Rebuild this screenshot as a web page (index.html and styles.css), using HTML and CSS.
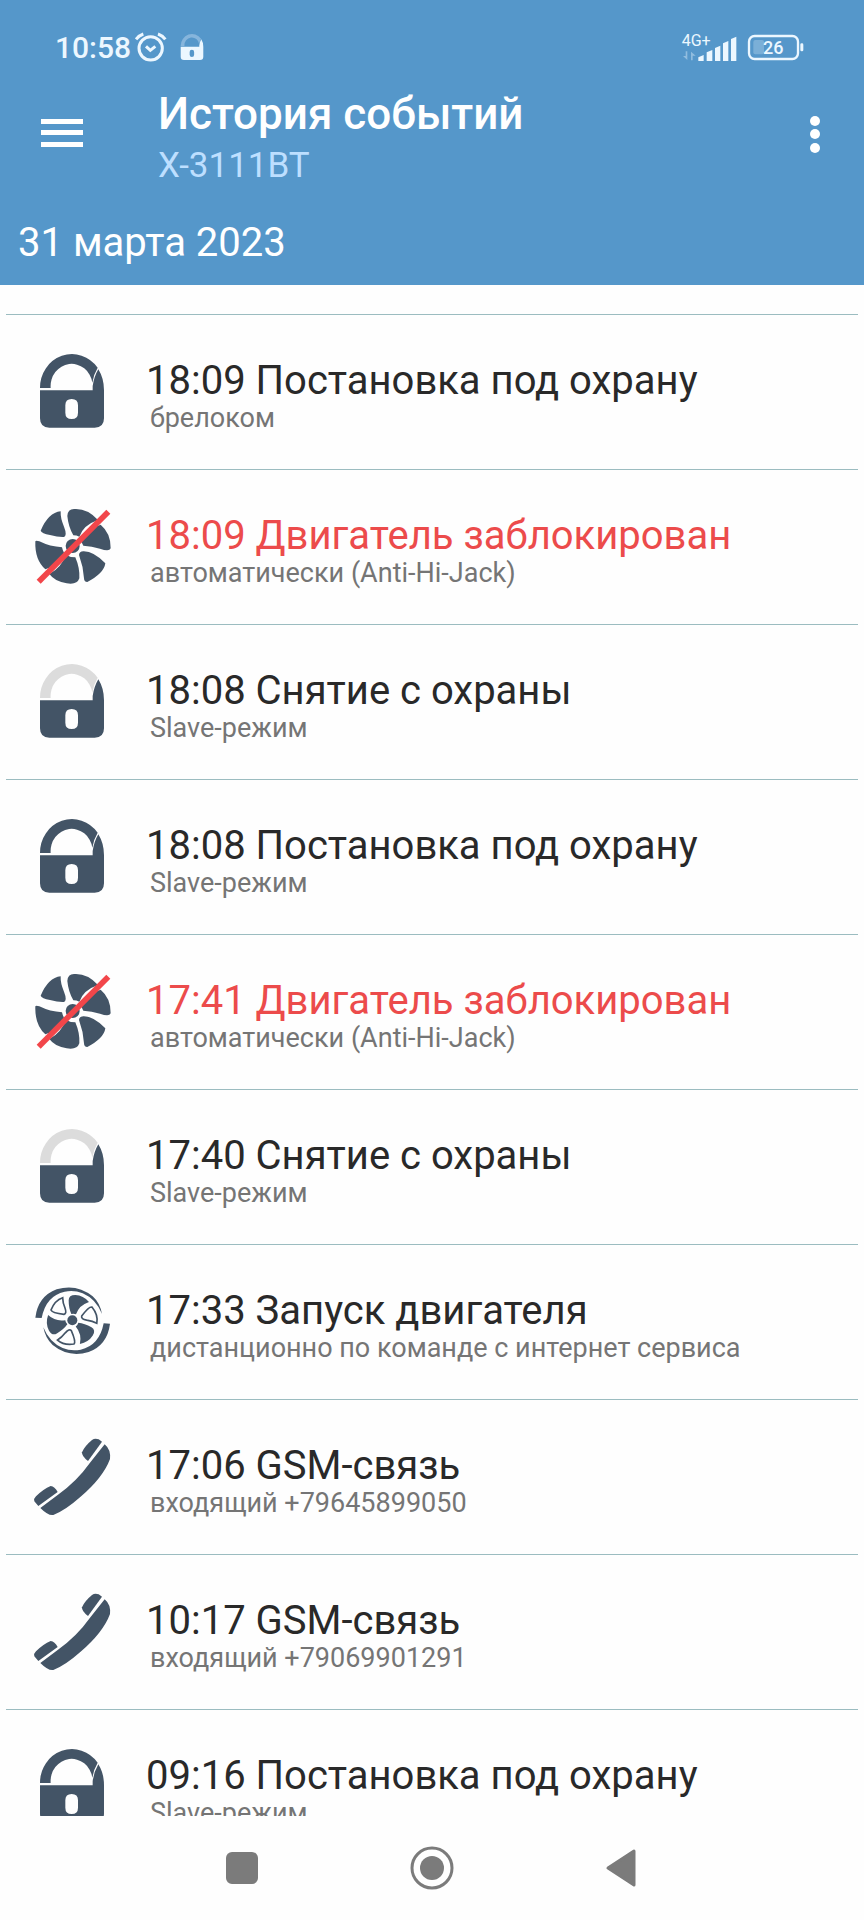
FILE: index.html
```html
<!DOCTYPE html>
<html lang="ru">

<head>
  <meta charset="utf-8">
  <meta name="viewport" content="width=device-width, initial-scale=1">
  <title>История событий</title>
  <link rel="stylesheet" href="styles.css">
</head>

<body>

  <!-- Иконки -->
  <svg class="sprite" aria-hidden="true">
    <symbol id="lock" viewBox="96 66 240 240">
      <path class="shackle" d="M120 174A96 101 0 0 1 293 113Q281 133 277 158A63 67 0 0 0 152 174Z" />
      <path fill-rule="evenodd" d="M120 181H278V168Q282 140 295 118Q312 145 312 181V265Q312 293 284 293H148Q120 293 120 265ZM215 207Q196 207 196 226V248Q196 267 215 267Q234 267 234 248V226Q234 207 215 207Z" />
    </symbol>
    <symbol id="blocked" viewBox="96 81 240 240">
      <path d="M182 94Q145 98 122 152Q125 160 150 165Q175 172 192 171Q202 165 192 140Q181 115 182 94Z" />
      <path d="M202 108Q203 87 222 87Q262 84 294 120Q250 135 238 170Q230 166 220 166Q205 140 202 108Z" />
      <path d="M302 134Q333 160 332 205Q328 216 300 206Q275 198 250 197Q246 188 242 182Q255 148 302 134Z" />
      <path d="M250 214Q280 213 316 250Q312 280 262 306Q252 306 252 295Q250 260 237 225Q238 214 250 214Z" />
      <path d="M226 232Q240 265 238 295Q232 315 200 310Q165 305 148 282Q185 262 197 224Q210 232 226 232Z" />
      <path d="M106 184Q108 180 118 184Q150 200 186 202Q188 212 192 218Q180 255 136 268Q104 240 106 184Z" />
      <circle cx="218" cy="198" r="21" />
      <path class="strike" d="M116 305L325 95" />
    </symbol>
    <symbol id="engine" viewBox="96 69 240 240">
      <path id="arc" d="M106 176Q114 112 170 91Q230 73 278 112Q300 132 306 165Q288 120 248 103Q222 92 194 98Q138 110 125 177Z" />
      <use href="#arc" transform="rotate(180 218 185)" />
      <g id="blades">
        <path d="M206 124Q206 108 226 108Q250 109 267 129Q238 138 228 166Q222 163 214 165Q206 148 206 124Z" />
        <path class="line" d="M188 116Q164 124 153 153Q156 162 192 166Q201 164 195 147Q188 130 188 116Z" />
      </g>
      <use href="#blades" transform="rotate(120 217 184)" />
      <use href="#blades" transform="rotate(240 217 184)" />
      <circle cx="217" cy="184" r="15" />
    </symbol>
    <symbol id="phone" viewBox="96 84 240 240">
      <path d="M314 106Q333 122 330 150Q310 205 240 265Q195 305 160 318Q145 321 121 297L174 257Q232 215 270 161Z" />
      <path d="M306 98L296 91Q284 87 276 93Q254 111 246 130Q245 142 264 156Z" />
      <path d="M115 291L103 277Q101 268 108 262Q130 240 152 231Q164 233 173 249Z" />
    </symbol>
  </svg>

  <header class="header">
    <div class="status">
      <span class="clock">10:58</span>
      <svg class="alarm" viewBox="408 95 96 90">
        <circle cx="455" cy="144" r="35" />
        <path d="M441 138L454 150L469 138M411 117Q419 106 433 101M477 101Q491 106 499 117" />
      </svg>
      <svg class="guard" viewBox="114 70 204 226"><use href="#lock" x="96" y="66" width="240" height="240" /></svg>
      <svg class="signal" viewBox="748 93 171 90">
        <text x="750" y="134">4G+</text>
        <path class="dim" d="M767 151V177L754 165H762V151ZM778 178V152L792 164H783V178Z" />
        <path d="M800 180V169L816 162V180ZM825 180V154L842 147V180ZM850 180V141L866 134V180ZM874 180V127L890 120V180ZM898 180V114L914 107V180Z" />
      </svg>
      <svg class="battery" viewBox="944 99 174 87">
        <rect class="case" x="950" y="108" width="147" height="69" rx="17" />
        <rect class="charge" x="963" y="120" width="32" height="43" rx="6" />
        <rect x="1104" y="130" width="9" height="24" rx="4" />
        <text x="992" y="163">26</text>
      </svg>
    </div>
    <div class="appbar">
      <button class="menu" aria-label="Меню">
        <svg width="42" height="28" viewBox="0 0 42 28"><path d="M0 0H42V5H0ZM0 11H42V16H0ZM0 23H42V28H0Z" /></svg>
      </button>
      <div class="heading">
        <h1>История событий</h1>
        <p>X-3111BT</p>
      </div>
      <button class="more" aria-label="Ещё">
        <svg width="10" height="37" viewBox="0 0 10 37">
          <circle cx="5" cy="5" r="5" />
          <circle cx="5" cy="18" r="5" />
          <circle cx="5" cy="32" r="5" />
        </svg>
      </button>
    </div>
    <h2 class="date">31 марта 2023</h2>
  </header>

  <main class="history">
    <ul class="events">
      <li class="event">
        <svg class="icon"><use href="#lock" /></svg>
        <div class="info">
          <p class="name">18:09 Постановка под охрану</p>
          <p class="source">брелоком</p>
        </div>
      </li>
      <li class="event alert">
        <svg class="icon"><use href="#blocked" /></svg>
        <div class="info">
          <p class="name">18:09 Двигатель заблокирован</p>
          <p class="source">автоматически (Anti-Hi-Jack)</p>
        </div>
      </li>
      <li class="event">
        <svg class="icon open"><use href="#lock" /></svg>
        <div class="info">
          <p class="name">18:08 Снятие с охраны</p>
          <p class="source">Slave-режим</p>
        </div>
      </li>
      <li class="event">
        <svg class="icon"><use href="#lock" /></svg>
        <div class="info">
          <p class="name">18:08 Постановка под охрану</p>
          <p class="source">Slave-режим</p>
        </div>
      </li>
      <li class="event alert">
        <svg class="icon"><use href="#blocked" /></svg>
        <div class="info">
          <p class="name">17:41 Двигатель заблокирован</p>
          <p class="source">автоматически (Anti-Hi-Jack)</p>
        </div>
      </li>
      <li class="event">
        <svg class="icon open"><use href="#lock" /></svg>
        <div class="info">
          <p class="name">17:40 Снятие с охраны</p>
          <p class="source">Slave-режим</p>
        </div>
      </li>
      <li class="event">
        <svg class="icon"><use href="#engine" /></svg>
        <div class="info">
          <p class="name">17:33 Запуск двигателя</p>
          <p class="source">дистанционно по команде с интернет сервиса</p>
        </div>
      </li>
      <li class="event">
        <svg class="icon"><use href="#phone" /></svg>
        <div class="info">
          <p class="name">17:06 GSM-связь</p>
          <p class="source">входящий +79645899050</p>
        </div>
      </li>
      <li class="event">
        <svg class="icon"><use href="#phone" /></svg>
        <div class="info">
          <p class="name">10:17 GSM-связь</p>
          <p class="source">входящий +79069901291</p>
        </div>
      </li>
      <li class="event">
        <svg class="icon"><use href="#lock" /></svg>
        <div class="info">
          <p class="name">09:16 Постановка под охрану</p>
          <p class="source">Slave-режим</p>
        </div>
      </li>
    </ul>
  </main>

  <nav class="navbar">
    <button aria-label="Недавние">
      <svg width="44" height="44" viewBox="0 0 44 44"><rect x="6" y="6" width="32" height="32" rx="6" /></svg>
    </button>
    <button aria-label="Домой">
      <svg width="44" height="44" viewBox="0 0 44 44">
        <circle class="ring" cx="22" cy="22" r="20" />
        <circle cx="22" cy="22" r="12" />
      </svg>
    </button>
    <button aria-label="Назад">
      <svg width="44" height="44" viewBox="0 0 44 44"><path class="back" d="M8 22L34 5V39Z" /></svg>
    </button>
  </nav>

</body>

</html>
```
FILE: styles.css
```css
* {
  box-sizing: border-box;
}

body {
  display: flex;
  flex-direction: column;
  height: 100vh;
  margin: 0;
  font-family: Roboto, sans-serif;
  color: #292929;
  background: #fefefe;
}

h1,
h2,
p,
ul {
  margin: 0;
  padding: 0;
}

button {
  display: flex;
  align-items: center;
  justify-content: center;
  padding: 0;
  border: none;
  background: transparent;
  cursor: pointer;
}

.sprite {
  position: absolute;
  width: 0;
  height: 0;
}

/* Шапка */

.header {
  flex: none;
  color: #fff;
  fill: #fff;
  background: #5597ca;
}

.status {
  display: flex;
  align-items: center;
  height: 90px;
  padding: 4px 59px 0 55px;
  color: #ecf7ff;
  fill: #ecf7ff;
}

.clock {
  font-size: 30px;
  font-weight: 500;
}

.alarm {
  width: 32px;
  height: 30px;
  margin-left: 4px;
  fill: none;
  stroke: #ecf7ff;
  stroke-width: 9;
}

.guard {
  --shackle: #86b5dc;
  width: 24px;
  height: 28px;
  margin-left: 13px;
}

.signal {
  width: 57px;
  height: 30px;
  margin-left: auto;
  font-size: 48px;
}

.signal .dim {
  opacity: .4;
}

.battery {
  width: 58px;
  height: 29px;
  margin-left: 9px;
  font-size: 54px;
  font-weight: 500;
}

.battery .case {
  fill: none;
  stroke: #ecf7ff;
  stroke-width: 7;
}

.battery .charge {
  opacity: .25;
}

.appbar {
  display: flex;
  align-items: flex-start;
}

.menu {
  width: 124px;
  height: 86px;
  fill: #fff;
}

.more {
  width: 98px;
  height: 88px;
  fill: #fff;
}

.heading {
  flex: 1;
  padding-left: 34px;
}

.heading h1 {
  font-size: 44px;
  line-height: 48px;
  font-weight: 500;
}

.heading p {
  font-size: 35px;
  line-height: 56px;
  color: #bddfff;
}

.date {
  padding: 7px 18px 0;
  font-size: 40px;
  line-height: 84px;
  font-weight: 400;
}

/* Список событий */

.history {
  flex: 1;
  min-height: 0;
  padding: 29px 6px 0;
  overflow: hidden auto;
  scrollbar-width: none;
}

.events {
  list-style: none;
}

.event {
  display: flex;
  align-items: center;
  height: 155px;
  padding-left: 26px;
  border-top: 1px solid #9bbcc0;
}

.icon {
  flex: none;
  width: 80px;
  height: 80px;
  fill: #435466;
}

.shackle {
  fill: var(--shackle);
}

.open {
  --shackle: #dcdcdc;
}

.strike {
  stroke: #f2464a;
  stroke-width: 17;
}

.line {
  fill: none;
  stroke: #435466;
  stroke-width: 5;
}

.info {
  padding: 8px 0 0 34px;
}

.name {
  font-size: 40px;
  line-height: 44px;
}

.alert .name {
  color: #ec4b4b;
}

.source {
  padding-left: 4px;
  font-size: 27px;
  line-height: 30px;
  color: #757575;
}

/* Нижняя панель */

.navbar {
  display: flex;
  flex: none;
  justify-content: center;
  height: 104px;
  background: #fefefe;
}

.navbar button {
  width: 190px;
  fill: #7b7b7b;
}

.ring {
  fill: none;
  stroke: #7b7b7b;
  stroke-width: 3;
}

.back {
  stroke: #7b7b7b;
  stroke-width: 3;
  stroke-linejoin: round;
}
```
